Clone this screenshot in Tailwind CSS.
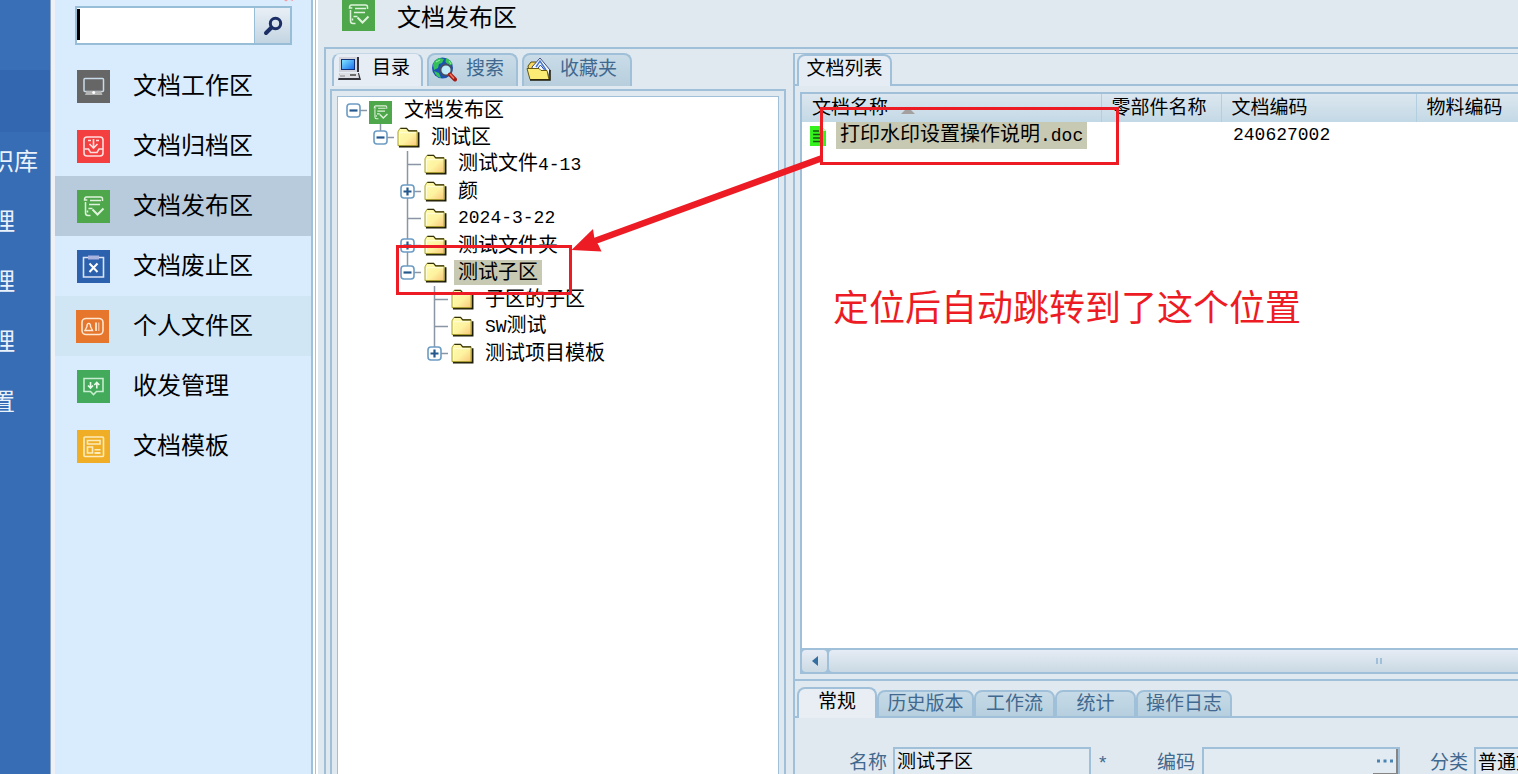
<!DOCTYPE html>
<html lang="zh-CN">
<head>
<meta charset="utf-8">
<title>文档发布区</title>
<script src="https://cdn.jsdelivr.net/npm/@tailwindcss/browser@4"></script>
</head>
<body class="relative flex h-screen overflow-hidden bg-[#e1e9f0] font-['Liberation_Sans','Noto_Sans_CJK_SC',sans-serif] text-black">

<svg class="absolute size-0" aria-hidden="true">
  <defs>
    <linearGradient id="fold" x1="0" y1="0" x2="1" y2="1"><stop offset="0" stop-color="#fffcb0"/><stop offset=".55" stop-color="#fdf3a0"/><stop offset="1" stop-color="#fbc67c"/></linearGradient>
    <linearGradient id="scr" x1="0" y1="0" x2="1" y2="1"><stop offset="0" stop-color="#7fe6ff"/><stop offset="1" stop-color="#1c6ff0"/></linearGradient>
  </defs>
  <symbol id="folder" viewBox="0 0 24 22">
    <path d="M2 20.500h20.500V5.500" fill="none" stroke="#1c1a08" stroke-width="2"/>
    <path d="M1 5l2-3.500h7L12 4h9v15.500H1z" fill="url(#fold)" stroke="#a39a20"/>
    <path d="M3.500 1.500H10L12.300 4H21" fill="none" stroke="#33300a" stroke-width="1.300"/>
    <path d="M2.500 18V6H20" fill="none" stroke="#fffde0"/>
  </symbol>
  <symbol id="minus" viewBox="0 0 15 15"><rect x="1" y="1" width="13" height="13" rx="3" fill="#fff" stroke="#6c9cc4" stroke-width="1.600"/><path d="M3.500 7.500h8" stroke="#25588c" stroke-width="2.200"/></symbol>
  <symbol id="plus" viewBox="0 0 15 15"><rect x="1" y="1" width="13" height="13" rx="3" fill="#fff" stroke="#6c9cc4" stroke-width="1.600"/><path d="M3.500 7.500h8M7.500 3.500v8" stroke="#25588c" stroke-width="2.200"/></symbol>
  <symbol id="publish" viewBox="0 0 33 33">
    <rect width="33" height="33" fill="#4ea74b"/>
    <g fill="none" stroke="#dff3dc" stroke-width="1.500"><path d="M25.500 11V9q0-2-2-2H9.500q-2 0-2 3h2.800M8.500 12v11q0 2.500 2.500 2.500h2.500M13 10.500h11M12 14.500h11M11.500 18.500h4M10.500 20.500v2"/><path d="M15.500 19.500l5 5 6-6" stroke-width="2"/></g>
  </symbol>
</svg>

<!-- outer navigation -->
<nav aria-label="主导航" class="flex w-[51px] shrink-0 flex-col overflow-hidden border-r border-[#8ea6c4] bg-[#366db4] text-[24px] text-[#e9f1fb]">
  <div class="h-[70px] shrink-0 bg-[#386fb6]"></div>
  <div class="h-[62px] shrink-0 bg-[#3368b0]"></div>
  <a href="#" class="flex h-[60px] shrink-0 items-center justify-end whitespace-nowrap pr-3">识库</a>
  <a href="#" class="flex h-[60px] shrink-0 items-center justify-end pr-[35px]">理</a>
  <a href="#" class="flex h-[60px] shrink-0 items-center justify-end pr-[35px]">理</a>
  <a href="#" class="flex h-[60px] shrink-0 items-center justify-end pr-[35px]">理</a>
  <a href="#" class="flex h-[60px] shrink-0 items-center justify-end pr-[35px]">置</a>
</nav>

<!-- document areas -->
<aside class="w-[262px] shrink-0 border-r-2 border-l-4 border-l-[#eef2f7] border-r-[#9fc0d8] bg-[#d9ecfe]">
  <div class="flex h-14 items-start pt-[6px] pl-5">
    <form class="flex h-[39px] w-[217px] border-2 border-[#98bdd6] bg-white">
      <input id="q" aria-label="搜索文档" autofocus class="min-w-0 flex-1 bg-white px-1 text-[22px] caret-transparent outline-none">
      <button type="button" aria-label="搜索" class="flex w-9 items-center justify-center border-l border-[#98bdd6] bg-linear-to-b from-[#e9eff6] to-[#c3d5e2]">
        <svg class="size-5" viewBox="0 0 20 20" fill="none" stroke="#1b2f66"><circle cx="12.500" cy="7.500" r="5.200" stroke-width="3"/><path d="M8.500 11.500L3 17" stroke-width="4" stroke-linecap="round"/></svg>
      </button>
    </form>
  </div>
  <nav aria-label="文档区域" class="text-[24px]">
    <a href="#" class="flex h-[60px] items-center gap-[23px] pl-[22px]">
      <svg class="size-[33px]" viewBox="0 0 33 33"><rect width="33" height="33" fill="#666"/><rect x="7" y="8.500" width="19.500" height="13" rx="1" fill="none" stroke="#c9dbe9" stroke-width="1.500"/><path d="M9.500 21h14.500l1.500 4h-17.500z" fill="#b5b5b5"/><circle cx="16.700" cy="22.500" r="1.500" fill="#fff"/></svg>文档工作区</a>
    <a href="#" class="flex h-[60px] items-center gap-[23px] pl-[22px]">
      <svg class="size-[33px]" viewBox="0 0 33 33"><rect width="33" height="33" fill="#f43f40"/><g fill="none" stroke="#ffdede" stroke-width="1.600"><rect x="7" y="7" width="19" height="19" rx="3"/><path d="M7.500 19h4l2 3.500h6.500l2-3.500h4M16.500 9v8M12.500 14l4 4 4-4M11 10.500h3M19 10.500h3"/></g></svg>文档归档区</a>
    <a href="#" aria-current="page" class="flex h-[60px] items-center gap-[23px] bg-[#b8cbdd] pl-[22px]">
      <svg class="size-[33px]"><use href="#publish"/></svg>文档发布区</a>
    <a href="#" class="flex h-[60px] items-center gap-[23px] pl-[22px]">
      <svg class="size-[33px]" viewBox="0 0 33 33"><rect width="33" height="33" fill="#2c61ae"/><path d="M11 7.500H6.500v19.500h20V7.500H22" fill="none" stroke="#dbe4f5" stroke-width="1.600"/><path d="M11 5.500h11v4H11z" fill="#aab2de"/><path d="M12.500 13.500l8 8.500M20.500 13.500l-8 8.500" stroke="#fff" stroke-width="2"/></svg>文档废止区</a>
    <a href="#" class="flex h-[60px] items-center gap-6 bg-[#d0e6f5] pl-[21px]">
      <svg class="size-[33px]" viewBox="0 0 33 33"><rect width="33" height="33" fill="#e5762c"/><rect x="6" y="8.500" width="21" height="16" rx="4" fill="none" stroke="#ffe6cf" stroke-width="1.600"/><path d="M9 20.500h7.500l-2-4a1.800 2.500 0 1 0-3.500 0z" fill="none" stroke="#ffe9d6" stroke-width="1.400"/><path d="M19 12.500h2v8.500h-2z" fill="#ffdcc0"/><path d="M22 12.500h1.500v8.500H22z" fill="#f8b68a"/></svg>个人文件区</a>
    <a href="#" class="flex h-[60px] items-center gap-[23px] pl-[22px]">
      <svg class="size-[33px]" viewBox="0 0 33 33"><rect width="33" height="33" fill="#43aa5c"/><path d="M7 8.500h19v13h-6.500l-3 3-3-3H7z" fill="none" stroke="#c8edce" stroke-width="1.600"/><path d="M13.500 12v5.500M11 15.500l2.500 2.500 2.500-2.500M19.800 18.500V13M17.300 15l2.500-2.500 2.500 2.500" fill="none" stroke="#eafbea" stroke-width="1.600"/></svg>收发管理</a>
    <a href="#" class="flex h-[60px] items-center gap-[23px] pl-[22px]">
      <svg class="size-[33px]" viewBox="0 0 33 33"><rect width="33" height="33" fill="#efae25"/><g fill="none" stroke="#fdebbb" stroke-width="1.600"><rect x="7" y="7" width="19.500" height="19.500" rx="1"/><path d="M10.500 10.500h12.500v3.500H10.500zM10.500 17h5v6h-5z"/></g><path d="M17.500 19h6v1.500h-6zM17.500 22h6v2h-6z" fill="#fdebbb"/></svg>文档模板</a>
  </nav>
</aside>

<main class="flex min-w-0 flex-1 flex-col">
  <div class="flex min-h-0 flex-1">
    <div class="w-[5px] shrink-0 border-r-2 border-l-2 border-r-white border-l-white"><div class="h-full w-[1px] bg-[#a9c1da]"></div></div>
    <div class="flex min-w-0 flex-1 flex-col pl-[6px]">
      <header class="flex h-[47px] shrink-0 items-start gap-[22px] overflow-hidden pl-[18px]">
        <div class="h-[31px] overflow-hidden"><svg class="-mt-[2px] size-[33px]"><use href="#publish"/></svg></div>
        <h1 class="text-[24px] leading-[35px]">文档发布区</h1>
      </header>

      <div class="flex min-h-0 flex-1 border-t-2 border-l-2 border-[#9fc0d8]">
        <!-- directory tree -->
        <section class="flex w-[460px] shrink-0 flex-col pt-1 pl-1">
          <div role="tablist" class="flex h-[33px] shrink-0 gap-1 pl-[2px] text-[19px] text-[#41698f]">
            <button role="tab" aria-selected="true" class="flex w-[91px] items-center gap-[10px] rounded-t-lg border-x-2 border-t border-[#9fc0d8] border-t-[#c4d7e4] bg-[#e7edf4] pb-1 pl-[3px] text-black">
              <svg class="size-[25px]" viewBox="0 0 25 25"><path d="M4 1h18v15H4z" fill="#33333d"/><path d="M2 1h18v15H2z" fill="#d3d3dc"/><path d="M4 3h14v11H4z" fill="#10307c"/><path d="M5 4h12v9H5z" fill="url(#scr)"/><path d="M3 17h19l2 7H1z" fill="#32323a"/><path d="M3 17h18l1 5H1z" fill="#dddde4"/><path d="M13 19h6" stroke="#444" stroke-width="1.500"/><path d="M3 20h5" stroke="#888"/></svg>目录</button>
            <button role="tab" aria-selected="false" class="flex w-[91px] items-center gap-[9px] rounded-t-lg border-2 border-b-0 border-[#9fc0d8] bg-linear-to-b from-[#c9dce8] to-[#b7cedd] pb-[3px] pl-[2px]">
              <svg class="size-[26px]" viewBox="0 0 26 26"><circle cx="11.500" cy="12" r="10.500" fill="#1b51b4"/><path d="M2 9q1-5 6-7l5 1-2 4-3 1-1 4-4 2zM15 2q5 2 6.500 6l-3 2-4-4zM3 15l5 2 2 5q-5-1-7-7z" fill="#35c05a"/><path d="M5 6l4-2M18 5l2 3" stroke="#98f0a0"/><circle cx="15" cy="14" r="5.500" fill="#bfeaf8" stroke="#444d62" stroke-width="1.800"/><path d="M19 18.500l5 5" stroke="#a31d16" stroke-width="4" stroke-linecap="round"/><path d="M19 18l4 4.500" stroke="#f37b61" stroke-width="1.500"/></svg>搜索</button>
            <button role="tab" aria-selected="false" class="flex w-[110px] items-center gap-2 rounded-t-lg border-2 border-b-0 border-[#9fc0d8] bg-linear-to-b from-[#c9dce8] to-[#b7cedd] pb-[3px] pl-[2px]">
              <svg class="size-[26px]" viewBox="0 0 26 26"><path d="M2 10l3-4h5l2 3v12H4z" fill="#f6d95e" stroke="#5b4c0c"/><path d="M6 11L14 2l10 12-2 8H8z" fill="#f5faff" stroke="#3b4c7c"/><path d="M10 11l4-6 6 9" fill="none" stroke="#4778ce" stroke-width="1.500"/><path d="M12 12l2.500-3 4 5" stroke="#28499f" fill="none"/><path d="M1 12.500h12l2 2h6l2 9H4z" fill="#faec74" stroke="#6c5a10"/><path d="M4 24h20V14" stroke="#1c1a08" stroke-width="1.500" fill="none"/></svg>收藏夹</button>
          </div>
          <div class="mt-[3px] flex min-h-0 flex-1 border-2 border-b-0 border-[#9fc0d8] px-[5px] pt-[5px]">
            <ul role="tree" aria-label="目录" class="min-w-0 flex-1 overflow-hidden border-x border-t border-[#9fc0d8] bg-white pl-[2px] text-[20px] leading-[25px] whitespace-nowrap">
              <li role="treeitem" class="flex h-[27px] items-center">
                <svg class="size-[27px] shrink-0" viewBox="0 0 27 27"><path d="M13.500 13.500H27" stroke="#8a96a5" stroke-width="1.500"/><use href="#minus" x="6" y="6" width="15" height="15"/></svg>
                <svg class="mt-1 ml-[2px] size-[23px] shrink-0"><use href="#publish"/></svg>
                <span class="ml-2 px-1">文档发布区</span></li>
              <li role="treeitem" class="flex h-[27px] items-center pl-[27px]">
                <svg class="size-[27px] shrink-0" viewBox="0 0 27 27"><path d="M13.500 0v13.500H27" fill="none" stroke="#8a96a5" stroke-width="1.500"/><use href="#minus" x="6" y="6" width="15" height="15"/></svg>
                <svg class="ml-[3px] h-[21px] w-[23px] shrink-0"><use href="#folder"/></svg>
                <span class="ml-[7px] px-1">测试区</span></li>
              <li role="treeitem" class="flex h-[27px] items-center pl-[54px]">
                <svg class="size-[27px] shrink-0" viewBox="0 0 27 27"><path d="M13.500 0v27M13.500 13.500H27" fill="none" stroke="#8a96a5" stroke-width="1.500"/></svg>
                <svg class="ml-[3px] h-[21px] w-[23px] shrink-0"><use href="#folder"/></svg>
                <span class="ml-[7px] px-1">测试文件<span class="font-['Liberation_Mono',monospace] text-[18px]">4-13</span></span></li>
              <li role="treeitem" class="flex h-[27px] items-center pl-[54px]">
                <svg class="size-[27px] shrink-0" viewBox="0 0 27 27"><path d="M13.500 0v27M13.500 13.500H27" fill="none" stroke="#8a96a5" stroke-width="1.500"/><use href="#plus" x="6" y="6" width="15" height="15"/></svg>
                <svg class="ml-[3px] h-[21px] w-[23px] shrink-0"><use href="#folder"/></svg>
                <span class="ml-[7px] px-1">颜</span></li>
              <li role="treeitem" class="flex h-[27px] items-center pl-[54px]">
                <svg class="size-[27px] shrink-0" viewBox="0 0 27 27"><path d="M13.500 0v27M13.500 13.500H27" fill="none" stroke="#8a96a5" stroke-width="1.500"/></svg>
                <svg class="ml-[3px] h-[21px] w-[23px] shrink-0"><use href="#folder"/></svg>
                <span class="ml-[7px] px-1 font-['Liberation_Mono',monospace] text-[18px]">2024-3-22</span></li>
              <li role="treeitem" class="flex h-[27px] items-center pl-[54px]">
                <svg class="size-[27px] shrink-0" viewBox="0 0 27 27"><path d="M13.500 0v27M13.500 13.500H27" fill="none" stroke="#8a96a5" stroke-width="1.500"/><use href="#plus" x="6" y="6" width="15" height="15"/></svg>
                <svg class="ml-[3px] h-[21px] w-[23px] shrink-0"><use href="#folder"/></svg>
                <span class="ml-[7px] px-1">测试文件夹</span></li>
              <li role="treeitem" aria-selected="true" class="flex h-[27px] items-center pl-[54px]">
                <svg class="size-[27px] shrink-0" viewBox="0 0 27 27"><path d="M13.500 0v13.500H27" fill="none" stroke="#8a96a5" stroke-width="1.500"/><use href="#minus" x="6" y="6" width="15" height="15"/></svg>
                <svg class="ml-[3px] h-[21px] w-[23px] shrink-0"><use href="#folder"/></svg>
                <span class="ml-[7px] bg-[#c8c9b3] px-1">测试子区</span></li>
              <li role="treeitem" class="flex h-[27px] items-center pl-[81px]">
                <svg class="size-[27px] shrink-0" viewBox="0 0 27 27"><path d="M13.500 0v27M13.500 13.500H27" fill="none" stroke="#8a96a5" stroke-width="1.500"/></svg>
                <svg class="ml-[3px] h-[21px] w-[23px] shrink-0"><use href="#folder"/></svg>
                <span class="ml-[7px] px-1">子区的子区</span></li>
              <li role="treeitem" class="flex h-[27px] items-center pl-[81px]">
                <svg class="size-[27px] shrink-0" viewBox="0 0 27 27"><path d="M13.500 0v27M13.500 13.500H27" fill="none" stroke="#8a96a5" stroke-width="1.500"/></svg>
                <svg class="ml-[3px] h-[21px] w-[23px] shrink-0"><use href="#folder"/></svg>
                <span class="ml-[7px] px-1"><span class="font-['Liberation_Mono',monospace] text-[18px]">SW</span>测试</span></li>
              <li role="treeitem" class="flex h-[27px] items-center pl-[81px]">
                <svg class="size-[27px] shrink-0" viewBox="0 0 27 27"><path d="M13.500 0v13.500H27" fill="none" stroke="#8a96a5" stroke-width="1.500"/><use href="#plus" x="6" y="6" width="15" height="15"/></svg>
                <svg class="ml-[3px] h-[21px] w-[23px] shrink-0"><use href="#folder"/></svg>
                <span class="ml-[7px] px-1">测试项目模板</span></li>
            </ul>
          </div>
        </section>

        <div class="w-[7px] shrink-0"></div>

        <!-- document list and details -->
        <section class="mt-1 flex min-w-0 flex-1 flex-col border-t border-l-2 border-[#9fc0d8]">
          <div role="tablist" class="flex h-[32px] shrink-0">
            <div class="w-[2px] border-b-2 border-[#9fc0d8]"></div>
            <button role="tab" aria-selected="true" class="w-[95px] rounded-t-lg border-2 border-b-0 border-[#9fc0d8] bg-[#e5ecf3] pb-1 text-[19px] leading-6">文档列表</button>
            <div class="flex-1 border-b-2 border-[#9fc0d8]"></div>
          </div>
          <div class="mt-[6px] ml-[5px] flex min-h-0 flex-1 flex-col border-t-2 border-l-2 border-[#9fc0d8] bg-white">
            <div class="min-h-0 flex-1 overflow-hidden">
              <table class="w-full table-fixed border-collapse text-left whitespace-nowrap">
                <colgroup><col class="w-[299px]"><col class="w-[120px]"><col class="w-[195px]"><col></colgroup>
                <thead>
                  <tr class="h-7 bg-linear-to-b from-[#dce7ef] to-[#c3d9e6] text-[19px] leading-7">
                    <th class="p-0 pl-[10px] font-normal"><span class="flex items-center gap-[13px]">文档名称<svg class="mt-1 h-[7px] w-[14px]" viewBox="0 0 14 7"><path d="M7 0l7 7H0z" fill="#a5a0a0"/></svg></span></th>
                    <th class="border-l border-[#b2cfe0] p-0 pl-[10px] font-normal">零部件名称</th>
                    <th class="border-l border-[#b2cfe0] p-0 pl-[10px] font-normal">文档编码</th>
                    <th class="border-l border-[#b2cfe0] p-0 pl-[10px] font-normal">物料编码</th>
                  </tr>
                </thead>
                <tbody>
                  <tr class="h-[27px] text-[20px]">
                    <td class="p-0 pl-2"><span class="flex items-center gap-[10px]">
                      <svg class="h-5 w-4 shrink-0" viewBox="0 0 16 20"><path d="M0 0h11l5 5v15H0z" fill="#35f21f"/><path d="M11 0v5h5z" fill="#c6f7c0"/><path d="M3 5h6M3 8.500h10M3 12h10M3 15.500h10" stroke="#12570c" stroke-width="1.500"/></svg>
                      <span class="bg-[#c8c9b3] px-1 leading-[25px]">打印水印设置操作说明<span class="font-['Liberation_Mono',monospace] text-[18px]">.doc</span></span></span></td>
                    <td class="p-0"></td>
                    <td class="p-0 pl-3 font-['Liberation_Mono',monospace] text-[18px]">240627002</td>
                    <td class="p-0"></td>
                  </tr>
                </tbody>
              </table>
            </div>
            <div class="flex h-[26px] shrink-0 border-y-2 border-[#9fc0d8] bg-[#9fc0d8]">
              <button aria-label="向左滚动" class="flex w-[25px] items-center justify-center rounded bg-linear-to-b from-[#e6ecf5] to-[#cbdae4]"><svg class="h-[10px] w-[6px]" viewBox="0 0 6 10"><path d="M6 0v10L0 5z" fill="#356f9f"/></svg></button>
              <div class="ml-[2px] flex flex-1 items-center rounded-l bg-linear-to-b from-[#e6ecf5] to-[#c9d9e3]">
                <div class="flex-[549]"></div><div class="h-[6px] w-[6px] border-x-2 border-[#9fc0d8]"></div><div class="flex-[137]"></div>
              </div>
            </div>
          </div>
          <div class="mt-[5px] h-[95px] shrink-0 overflow-hidden border-t-2 border-[#9fc0d8] pt-[6px]">
            <div role="tablist" class="flex h-[31px] items-end text-[19px] leading-6 text-[#41698f]">
              <div class="h-full w-[2px] border-b-2 border-[#9fc0d8]"></div>
              <button role="tab" aria-selected="true" class="h-full w-[80px] rounded-t-lg border-2 border-b-0 border-[#9fc0d8] bg-[#e8eef4] pb-1 text-black">常规</button>
              <button role="tab" class="h-7 w-[97px] rounded-t-lg border-2 border-[#9fc0d8] bg-linear-to-b from-[#c6dae7] to-[#b6cfde]">历史版本</button>
              <button role="tab" class="h-7 w-[81px] rounded-t-lg border-2 border-[#9fc0d8] bg-linear-to-b from-[#c6dae7] to-[#b6cfde]">工作流</button>
              <button role="tab" class="h-7 w-[81px] rounded-t-lg border-2 border-[#9fc0d8] bg-linear-to-b from-[#c6dae7] to-[#b6cfde]">统计</button>
              <button role="tab" class="h-7 w-[96px] rounded-t-lg border-2 border-[#9fc0d8] bg-linear-to-b from-[#c6dae7] to-[#b6cfde]">操作日志</button>
              <div class="h-full flex-1 border-b-2 border-[#9fc0d8]"></div>
            </div>
            <form class="flex items-start pt-[29px] pl-[54px] text-[19px] whitespace-nowrap text-[#41698f]">
              <label for="fname" class="mr-[6px] leading-8">名称</label>
              <input id="fname" value="测试子区" class="h-8 w-[198px] shrink-0 border-2 border-[#9fc0d8] bg-[#e3ebf2] px-[2px] pb-2 text-black">
              <span class="ml-2 w-[58px] shrink-0 leading-8">*</span>
              <label for="fcode" class="mr-[7px] leading-8">编码</label>
              <div class="flex h-8 w-[198px] shrink-0 border-2 border-[#9fc0d8] bg-[#e3ebf2]">
                <input id="fcode" class="min-w-0 flex-1 bg-transparent px-[2px]">
                <button type="button" aria-label="选择编码" class="flex h-[26px] w-[25px] items-center justify-center border-r-2 border-b-2 border-[#858585]"><svg class="h-1 w-4" viewBox="0 0 16 4"><path d="M0 .5h3v3H0zM6.500 .5h3v3h-3zM13 .5h3v3h-3z" fill="#4a83b0"/></svg></button>
              </div>
              <label for="fkind" class="mr-[6px] ml-[30px] leading-8">分类</label>
              <select id="fkind" class="h-8 w-[198px] shrink-0 appearance-none border-2 border-[#9fc0d8] bg-[#e3ebf2] px-[2px] pb-1 text-black"><option>普通文档</option></select>
            </form>
          </div>
        </section>
      </div>
    </div>
  </div>
</main>

<!-- annotation marks laid over the window -->
<div class="absolute top-[9px] left-[77px] h-[31px] w-[3px] bg-black"></div>
<svg class="absolute top-0 left-[284px] h-[2px] w-[10px]" viewBox="0 0 10 2"><path d="M0 0h4L2 1.500zM6 0h3v1z" fill="#f49aa0"/></svg>
<div class="absolute top-[245px] left-[396px] h-[50px] w-[176px] border-3 border-[#ed1c24]"></div>
<div class="absolute top-[107px] left-[820px] h-[58px] w-[299px] border-3 border-[#ed1c24]"></div>
<svg class="pointer-events-none absolute top-[150px] left-[570px] h-[110px] w-[260px]" viewBox="0 0 260 110"><path d="M251 8.500L22 92" stroke="#ed1c24" stroke-width="6.500"/><path d="M1.500 100L23 79l1.500 10 4 6 3 6.500z" fill="#ed1c24"/></svg>
<p class="absolute top-[283px] left-[833px] text-[36px] leading-[52px] whitespace-nowrap text-[#ed1c24]">定位后自动跳转到了这个位置</p>
</body>
</html>
